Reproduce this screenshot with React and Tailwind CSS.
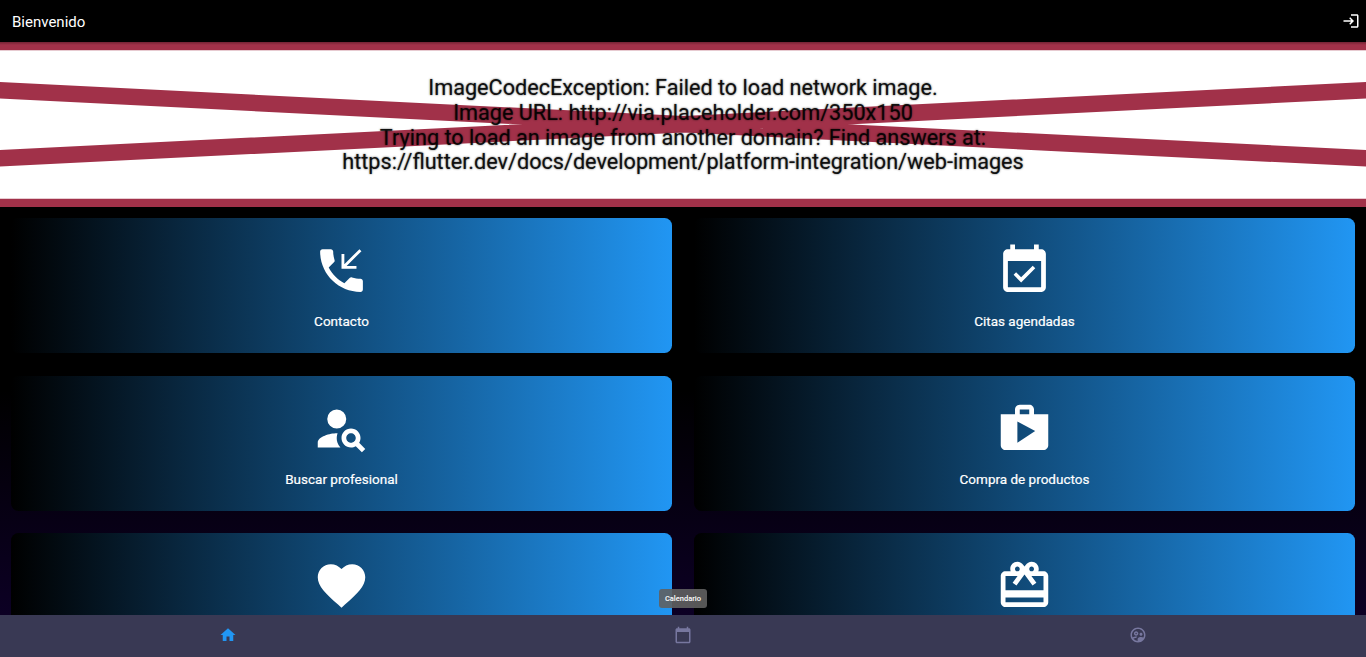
import React from "react";
import { MdOutlineSupervisedUserCircle } from "react-icons/md";

const PHONE =
  "M20 15.5c-1.25 0-2.45-.2-3.57-.57-.35-.11-.74-.03-1.02.24l-2.2 2.2c-2.83-1.44-5.15-3.75-6.59-6.59l2.2-2.21c.28-.26.36-.65.25-1C8.7 6.45 8.5 5.25 8.5 4c0-.55-.45-1-1-1H4c-.55 0-1 .45-1 1 0 9.39 7.61 17 17 17 .55 0 1-.45 1-1v-3.5c0-.55-.45-1-1-1zM20.4 3.85l-.85-.85-6.35 6.35V5H12v6.3h6.3v-1.2h-4.15z";
const EVENT =
  "M16.53 11.06L15.47 10l-4.88 4.88-2.12-2.12-1.06 1.06L10.59 17l5.94-5.94zM19 3h-1V1h-2v2H8V1H6v2H5c-1.11 0-1.99.9-1.99 2L3 19c0 1.1.89 2 2 2h14c1.1 0 2-.9 2-2V5c0-1.1-.9-2-2-2zm0 16H5V8h14v11z";
const SEARCH =
  "M10 4a4 4 0 1 0 0 8 4 4 0 0 0 0-8zM10.35 14.01C7.62 13.91 2 15.27 2 18v2h9.54c-2.47-2.76-1.23-5.89-1.19-5.99zM19.43 18.02c.36-.59.57-1.28.57-2.02 0-2.21-1.79-4-4-4s-4 1.79-4 4 1.79 4 4 4c.74 0 1.43-.22 2.02-.57L20.59 22 22 20.59l-2.57-2.57zM16 18c-1.1 0-2-.9-2-2s.9-2 2-2 2 .9 2 2-.9 2-2 2z";
const SHOP =
  "M16 6V4c0-1.11-.89-2-2-2h-4c-1.11 0-2 .89-2 2v2H2v13c0 1.11.89 2 2 2h16c1.11 0 2-.89 2-2V6h-6zm-6-2h4v2h-4V4zM9 18V9l7.5 4L9 18z";
const HEART =
  "M12 21.35l-1.45-1.32C5.4 15.36 2 12.28 2 8.5 2 5.42 4.42 3 7.5 3c1.74 0 3.41.81 4.5 2.09C13.09 3.81 14.76 3 16.5 3 19.58 3 22 5.42 22 8.5c0 3.78-3.4 6.86-8.55 11.54L12 21.35z";
const GIFT =
  "M20 6h-2.18c.11-.31.18-.65.18-1 0-1.66-1.34-3-3-3-1.05 0-1.96.54-2.5 1.35l-.5.67-.5-.68C10.96 2.54 10.05 2 9 2 7.34 2 6 3.34 6 5c0 .35.07.69.18 1H4c-1.11 0-1.99.89-1.99 2L2 19c0 1.11.89 2 2 2h16c1.11 0 2-.89 2-2V8c0-1.11-.89-2-2-2zm-5-2c.55 0 1 .45 1 1s-.45 1-1 1-1-.45-1-1 .45-1 1-1zM9 4c.55 0 1 .45 1 1s-.45 1-1 1-1-.45-1-1 .45-1 1-1zm11 15H4v-2h16v2zm0-5H4V8h5.08L7 10.83 8.62 12 11 8.76l1-1.36 1 1.36L15.38 12 17 10.83 14.92 8H20v6z";
const HOME = "M10 20v-6h4v6h5v-8h3L12 3 2 12h3v8z";
const CALENDAR =
  "M20 3h-1V1h-2v2H7V1H5v2H4c-1.1 0-2 .9-2 2v16c0 1.1.9 2 2 2h16c1.1 0 2-.9 2-2V5c0-1.1-.9-2-2-2zm0 18H4V8h16v13z";
const LOGIN =
  "M11 7L9.6 8.4l2.6 2.6H2v2h10.2l-2.6 2.6L11 17l5-5-5-5zm9 12h-8v2h8c1.1 0 2-.9 2-2V5c0-1.1-.9-2-2-2h-8v2h8v14z";

const cards = [
  { id: "contact", label: "Contacto", icon: PHONE },
  { id: "events", label: "Citas agendadas", icon: EVENT },
  { id: "search", label: "Buscar profesional", icon: SEARCH },
  { id: "shop", label: "Compra de productos", icon: SHOP },
  { id: "heart", icon: HEART },
  { id: "gift", icon: GIFT },
];

function Icon({ d, className }) {
  return (
    <svg viewBox="0 0 24 24" fill="currentColor" className={className}>
      <path d={d} />
    </svg>
  );
}

function Banner() {
  return (
    <section className="relative flex h-[165px] shrink-0 items-center justify-center overflow-hidden bg-white">
      <svg viewBox="0 0 1366 165" className="absolute inset-0 h-full w-full">
        <g stroke="#a13149" strokeWidth="16.5">
          <path d="M-10 47.8L1376 116.8M-10 116.8L1376 47.8" />
          <path d="M0 0H1366M0 165H1366" />
        </g>
      </svg>
      <div className="absolute inset-x-0 top-0 h-[3px] bg-linear-to-b from-black/30 to-transparent" />
      <p className="relative pt-[2px] text-center text-[21.65px] leading-[24.75px] whitespace-pre text-black/90 [text-shadow:0_0_2px_rgba(0,0,0,0.7)]">
        ImageCodecException: Failed to load network image.
        <br />
        Image URL: http://via.placeholder.com/350x150
        <br />
        Trying to load an image from another domain? Find answers at:
        <br />
        https://flutter.dev/docs/development/platform-integration/web-images
      </p>
    </section>
  );
}

export default function App() {
  return (
    <div className="flex h-[657px] w-full flex-col overflow-hidden bg-black font-[Roboto,sans-serif] text-white">
      <header className="flex h-[42px] shrink-0 items-center justify-between bg-black pr-[6px] pl-3">
        <h1 className="pt-[2px] text-[15px] leading-5">Bienvenido</h1>
        <Icon d={LOGIN} className="size-[18px]" />
      </header>
      <Banner />
      <main className="min-h-0 flex-1 overflow-hidden bg-linear-to-b/srgb from-black from-45% to-[#0c0024] px-[11.25px] pt-[11.25px]">
        <div className="grid auto-rows-[135px] grid-cols-2 gap-[22.5px]">
          {cards.map((c) => (
            <div
              key={c.id}
              className="flex flex-col items-center rounded-[7.5px] bg-linear-to-r/srgb from-black to-[#2196f3] pt-[23.75px]"
            >
              <Icon d={c.icon} className="size-[57px]" />
              {c.label && (
                <span className="pt-[14.25px] text-[13.5px] leading-4 [-webkit-text-stroke:0.2px_white]">
                  {c.label}
                </span>
              )}
            </div>
          ))}
        </div>
      </main>
      <nav className="grid h-[42px] shrink-0 grid-cols-3 bg-[#393954] text-[#77779f]">
        <div className="flex justify-center pt-[11px]">
          <Icon d={HOME} className="size-[18px] text-[#2196f3]" />
        </div>
        <div className="relative flex justify-center pt-[11px]">
          <Icon d={CALENDAR} className="size-[18px]" />
          <span className="absolute -top-[25.75px] flex h-[18.5px] w-12 items-center justify-center rounded-[3px] bg-[#616161]/90 text-[7.5px] font-medium text-white">
            Calendario
          </span>
        </div>
        <div className="flex justify-center pt-[11px]">
          <MdOutlineSupervisedUserCircle className="size-[18px]" />
        </div>
      </nav>
    </div>
  );
}
